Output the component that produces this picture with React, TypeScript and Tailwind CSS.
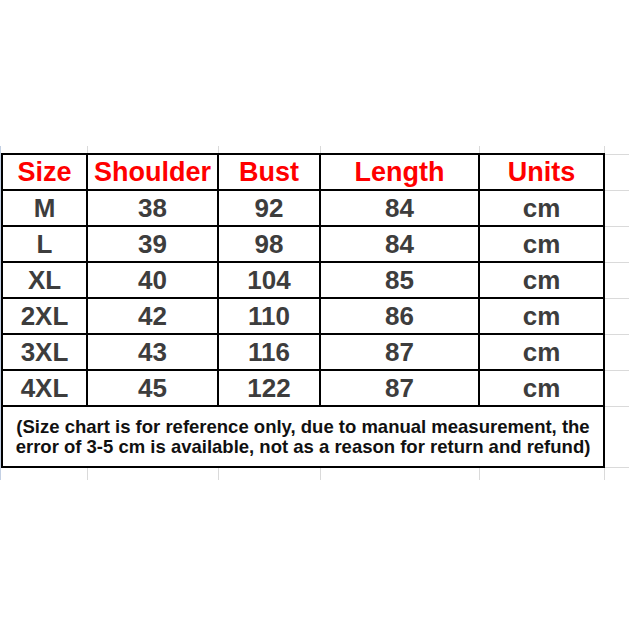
import * as React from "react";

const cols = ["w-[85px]", "w-[131px]", "w-[102px]", "w-[159px]", "w-[125px]"];
const stripCols = ["w-[87px]", "w-[131px]", "w-[102px]", "w-[159px]", "w-[125px]"];

const headers = ["Size", "Shoulder", "Bust", "Length", "Units"];

const rows = [
  ["M", "38", "92", "84", "cm"],
  ["L", "39", "98", "84", "cm"],
  ["XL", "40", "104", "85", "cm"],
  ["2XL", "42", "110", "86", "cm"],
  ["3XL", "43", "116", "87", "cm"],
  ["4XL", "45", "122", "87", "cm"],
];

function GridStrip({ height }: { height: string }) {
  return (
    <div className={`flex ${height}`}>
      {stripCols.map((w, i) => (
        <div key={i} className={`${w} shrink-0 border-r border-[#dadada]`} />
      ))}
      <div className="flex-1" />
    </div>
  );
}

export default function App() {
  return (
    <div
      className="w-[629px] h-[629px] bg-white pt-[146px] overflow-hidden"
      style={{ fontFamily: '"Liberation Sans", Arial, sans-serif' }}
    >
      <div className="border-l border-[#c3d0e4]">
        <GridStrip height="h-[7px]" />

        <div className="flex">
          {/* the chart */}
          <div className="w-[604px] shrink-0 border-l-2 border-t-2 border-black font-bold">
            <div className="flex">
              {headers.map((h, i) => (
                <div
                  key={h}
                  className={`${cols[i]} h-[36px] shrink-0 border-r-2 border-b-2 border-black flex items-center justify-center text-[27px] leading-none text-[#ff0000]`}
                >
                  {h}
                </div>
              ))}
            </div>
            {rows.map((r) => (
              <div key={r[0]} className="flex">
                {r.map((v, i) => (
                  <div
                    key={i}
                    className={`${cols[i]} h-[36px] shrink-0 border-r-2 border-b-2 border-black flex items-center justify-center text-[26px] leading-none text-[#3d3d3d]`}
                  >
                    {v}
                  </div>
                ))}
              </div>
            ))}
            <div className="h-[61px] border-r-2 border-b-2 border-black flex items-center justify-center text-center text-[18.5px] leading-[20px] text-[#111111]">
              <p>
                (Size chart is for reference only, due to manual measurement, the
                <br />
                error of 3-5 cm is available, not as a reason for return and refund)
              </p>
            </div>
          </div>

          {/* spreadsheet cells beyond the chart */}
          <div className="flex-1 flex flex-col">
            <div className="h-[1px]" />
            {[0, 1, 2, 3, 4, 5, 6].map((i) => (
              <div key={i} className="h-[36px] border-t border-[#dadada]" />
            ))}
            <div className="h-[61px] border-t border-[#dadada]" />
            <div className="h-[1px] border-t border-[#dadada]" />
          </div>
        </div>

        <GridStrip height="h-[12px]" />
      </div>
    </div>
  );
}
